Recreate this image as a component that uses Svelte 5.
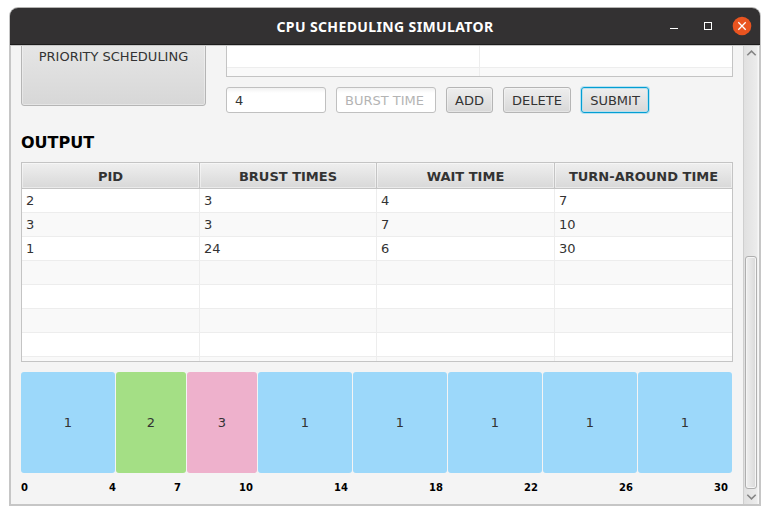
<script>
  const columns = [
    { title: 'PID', width: 178 },
    { title: 'BRUST TIMES', width: 177 },
    { title: 'WAIT TIME', width: 178 },
    { title: 'TURN-AROUND TIME', width: 178 }
  ];
  const rows = [
    ['2', '3', '4', '7'],
    ['3', '3', '7', '10'],
    ['1', '24', '6', '30'],
    ['', '', '', ''],
    ['', '', '', ''],
    ['', '', '', ''],
    ['', '', '', ''],
    ['', '', '', '']
  ];
  const blocks = [
    { pid: 1, width: 94 },
    { pid: 2, width: 70 },
    { pid: 3, width: 70 },
    { pid: 1, width: 94 },
    { pid: 1, width: 94 },
    { pid: 1, width: 94 },
    { pid: 1, width: 94 },
    { pid: 1, width: 94 }
  ];
  const ticks = [
    { at: 0, width: 7 },
    { at: 4, width: 88 },
    { at: 7, width: 65 },
    { at: 10, width: 72 },
    { at: 14, width: 95 },
    { at: 18, width: 95 },
    { at: 22, width: 95 },
    { at: 26, width: 95 },
    { at: 30, width: 95 }
  ];
</script>

<div class="screen">
  <div class="window">
    <header class="titlebar">
      <h1>CPU SCHEDULING SIMULATOR</h1>
      <div class="controls">
        <svg width="88" height="20" viewBox="0 0 88 20">
          <path d="M4 12.5H12" stroke="#fff" stroke-width="1" />
          <rect x="38.5" y="6.5" width="7" height="7" fill="none" stroke="#fff" />
          <circle cx="76" cy="10" r="9.3" fill="#e95420" />
          <path d="M72.3 6.3l7.4 7.4M79.7 6.3l-7.4 7.4" stroke="#fff" stroke-width="1.3" />
        </svg>
      </div>
    </header>

    <div class="body">
      <main>
        <div class="top">
          <button class="algo">PRIORITY SCHEDULING</button>
          <div class="right">
            <div class="input-table">
              <div class="line"><span></span></div>
              <div class="line odd"><span></span></div>
            </div>
            <div class="form">
              <div class="field">4</div>
              <div class="field prompt">BURST TIME</div>
              <button style:width="47px">ADD</button>
              <button style:width="68px">DELETE</button>
              <button class="focused" style:width="68px">SUBMIT</button>
            </div>
          </div>
        </div>

        <h2>OUTPUT</h2>

        <div class="table">
          <div class="head">
            {#each columns as col}
              <div class="th" style:width="{col.width}px">{col.title}</div>
            {/each}
          </div>
          {#each rows as row, i}
            <div class="row" class:odd={i % 2 === 1}>
              {#each row as cell, c}
                <div class="td" style:width="{columns[c].width}px">{cell}</div>
              {/each}
            </div>
          {/each}
        </div>

        <div class="gantt">
          {#each blocks as block}
            <div class="block p{block.pid}" style:width="{block.width}px">{block.pid}</div>
          {/each}
        </div>
        <div class="ticks">
          {#each ticks as tick}
            <span style:width="{tick.width}px">{tick.at}</span>
          {/each}
        </div>
      </main>

      <div class="scrollbar">
        <svg width="15" height="16" viewBox="0 0 15 16"><path d="M3.3 9.2L7.5 5.1L11.7 9.2" fill="none" stroke="#858585" stroke-width="1.6" /></svg>
        <div class="track"><div class="thumb"></div></div>
        <svg width="15" height="15" viewBox="0 0 15 15"><path d="M3.3 5.8L7.5 9.9L11.7 5.8" fill="none" stroke="#858585" stroke-width="1.6" /></svg>
      </div>
    </div>
  </div>
</div>

<style>
  :global(body) { background: #fff; }
  .screen, .screen * { box-sizing: border-box; }
  .screen {
    width: 770px;
    height: 515px;
    padding: 7px 9px 9px;
    overflow: hidden;
    font: 13px/16px "DejaVu Sans", sans-serif;
    color: #333;
  }
  .window {
    width: 752px;
    height: 499px;
    border: 2px solid #c6c6c6;
    border-top: 1px solid #b4b3b1;
    border-radius: 9px 9px 0 0;
    background: #f4f4f4;
  }
  .titlebar {
    display: flex;
    align-items: center;
    justify-content: flex-end;
    height: 37px;
    margin: 0 -1px;
    background: #333132;
    border-bottom: 1px solid #1d1c1c;
    border-radius: 8px 8px 0 0;
    position: relative;
  }
  h1 {
    position: absolute;
    inset: 0;
    margin: 0;
    text-align: center;
    font: bold 14px/38px "Noto Sans", sans-serif;
    letter-spacing: .38px;
    color: #fff;
  }
  .controls { width: 94px; height: 20px; position: relative; }
  .controls svg { display: block; }
  .body { display: flex; height: 459px; border-top: 1px solid #c8c8c8; overflow: hidden; }
  main { width: 732px; padding-left: 10px; }
  .top { display: flex; gap: 20px; height: 78px; }
  button {
    height: 26px;
    padding: 2px 0 0;
    border: 1px solid #b5b5b5;
    border-radius: 3px;
    background: linear-gradient(#eeeeee, #d8d8d8);
    box-shadow: inset 0 0 0 1px rgba(255, 255, 255, .35);
    font: 13px/16px "DejaVu Sans", sans-serif;
    color: #333;
  }
  .algo {
    width: 185px;
    height: 100px;
    margin-top: -40px;
    background: linear-gradient(#efefef, #d7d7d7);
  }
  .focused { border-color: #039ed3; box-shadow: 0 0 0 1px #b9e2f1, inset 0 0 0 1px #b9dfec; }
  .input-table {
    width: 507px;
    height: 31px;
    border: solid #c4c4c4;
    border-width: 0 1px 1px;
    overflow: hidden;
    background: #fff;
  }
  .line { height: 22px; border-bottom: 1px solid #ededed; }
  .line.odd { background: #f9f9f9; }
  .line span { display: block; width: 253px; height: 100%; border-right: 1px solid #ededed; }
  .form { display: flex; gap: 10px; margin-top: 10px; }
  .field {
    width: 100px;
    height: 26px;
    padding: 5px 8px;
    border: 1px solid #c0c0c0;
    border-radius: 3px;
    background: linear-gradient(#f1f1f1, #fff 5px);
  }
  .prompt { color: #b4b4b4; }
  h2 { margin: 9px 0 9px; font: bold 16px/20px "DejaVu Sans", sans-serif; color: #000; }
  .table {
    width: 712px;
    height: 200px;
    border: 1px solid #c4c4c4;
    background: #fff;
    overflow: hidden;
  }
  .head { display: flex; height: 26px; background: linear-gradient(#efefef, #d8d8d8); border-bottom: 1px solid #c4c4c4; }
  .th {
    flex: none;
    border-right: 1px solid #c4c4c4;
    box-shadow: inset 0 0 0 1px rgba(255, 255, 255, .45);
    text-align: center;
    font-weight: bold;
    line-height: 27px;
    white-space: nowrap;
  }
  .row { display: flex; height: 24px; border-bottom: 1px solid #ededed; }
  .row.odd { background: #f9f9f9; }
  .td { flex: none; padding-left: 4px; line-height: 24px; border-right: 1px solid #ededed; }
  .td:last-child { border-right: 0; }
  .gantt { display: flex; gap: 1px; margin-top: 10px; }
  .block { height: 101px; border-radius: 3px; line-height: 101px; text-align: center; }
  .p1 { background: #9cd8fa; }
  .p2 { background: #a4df85; }
  .p3 { background: #eeb1cc; }
  .ticks { display: flex; margin-top: 8px; font: bold 10px/13px "DejaVu Sans", sans-serif; color: #000; }
  .ticks span { text-align: right; }
  .scrollbar {
    display: flex;
    flex-direction: column;
    width: 16px;
    border: solid #cfcfcf;
    border-width: 0 0 0 1px;
    background: linear-gradient(90deg, #e0e0e0, #ebebeb 80%, #ebebeb 13px, #f7f7f7 14px);
  }
  .scrollbar svg { display: block; flex: none; }
  .track { flex: 1; display: flex; align-items: flex-end; padding-left: 1px; }
  .thumb {
    width: 12px;
    height: 233px;
    border: 1px solid #afafaf;
    border-radius: 3px;
    background: linear-gradient(90deg, #efefef, #d9d9d9);
    box-shadow: inset 0 0 0 1px #f5f5f5;
  }
</style>
